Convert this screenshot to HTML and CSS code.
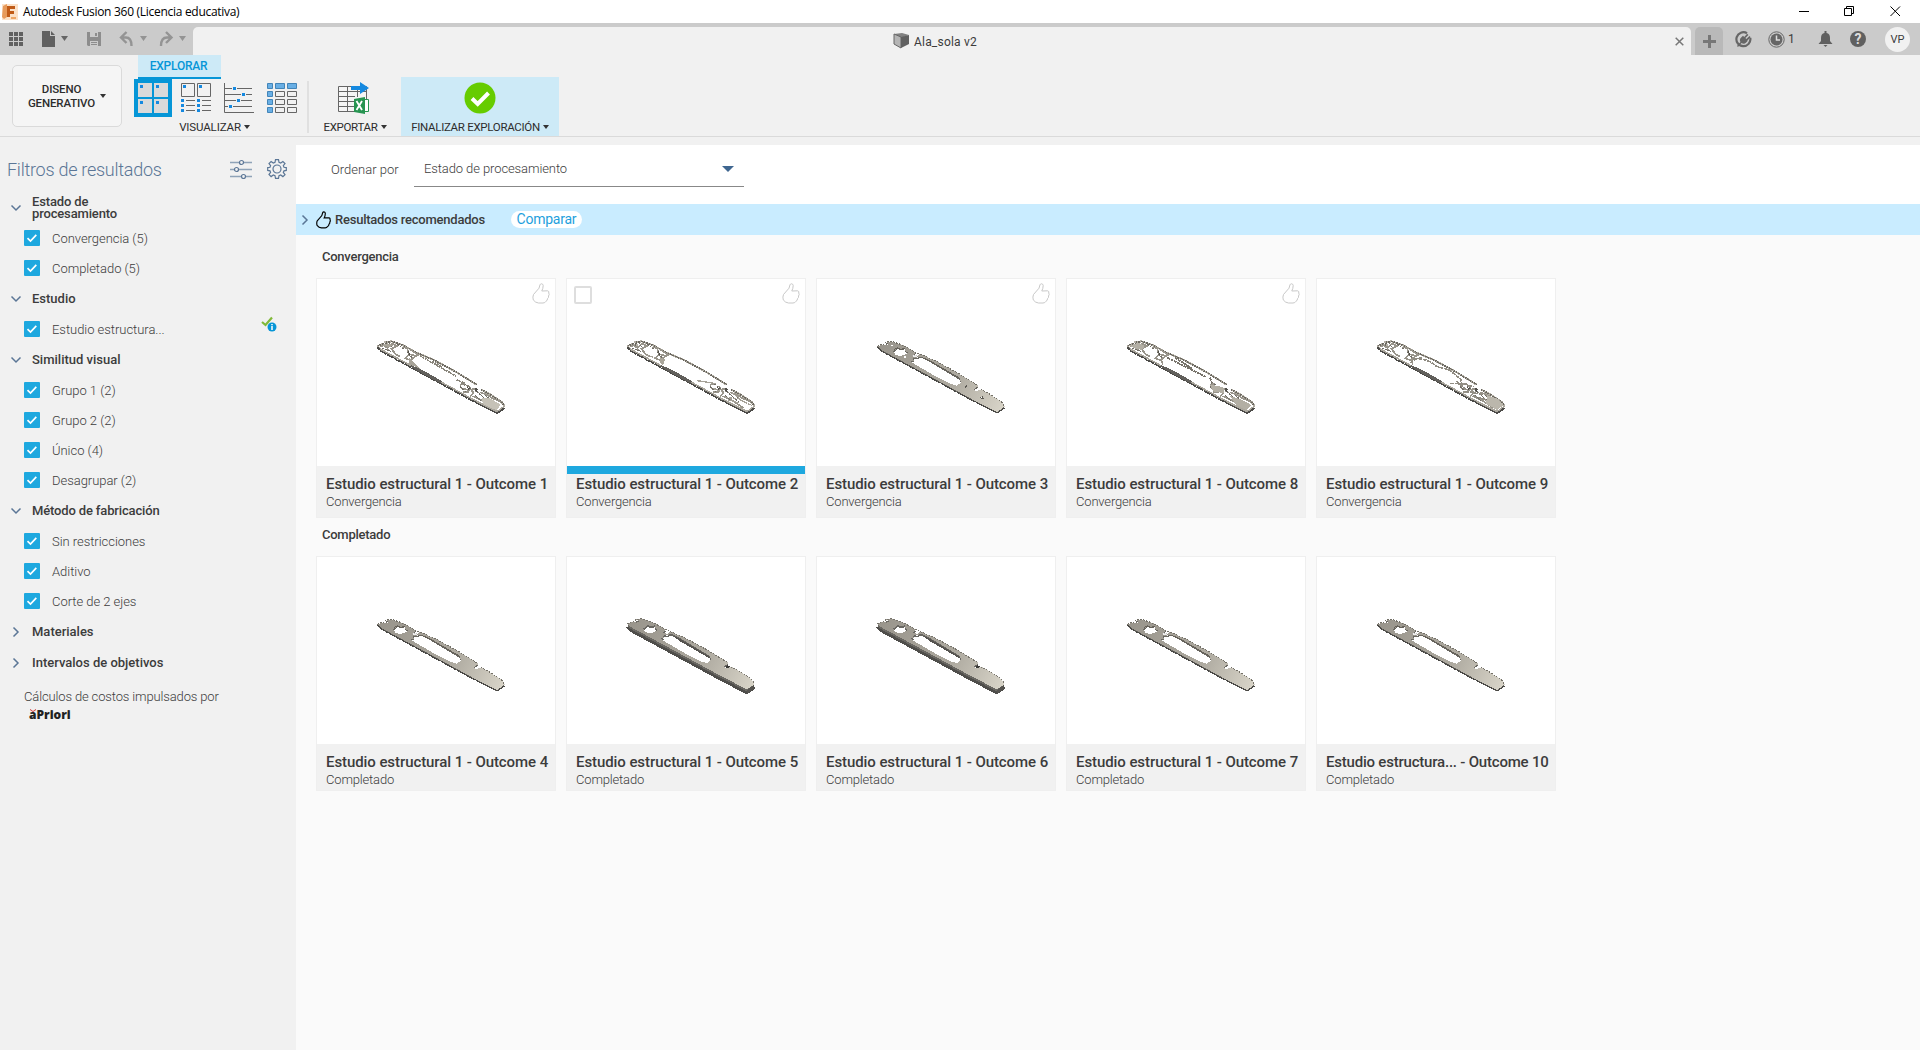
FILE: index.html
```html
<!DOCTYPE html>
<html lang="es">
<head>
<meta charset="utf-8">
<title>Autodesk Fusion 360 (Licencia educativa)</title>
<link rel="stylesheet" href="styles.css">
</head>
<body>
<svg class="defs" width="0" height="0">
  <defs>
    <linearGradient id="metal" x1="50" y1="70" x2="430" y2="270" gradientUnits="userSpaceOnUse"><stop offset="0" stop-color="#98948b"/><stop offset=".6" stop-color="#aeaaa0"/><stop offset="1" stop-color="#d9d5c9"/></linearGradient>
    <path id="edge" d="M52 78L62 89L160 142L250 191L340 240L411 276L434 260"/>
    <path id="upper" d="M52 79L66 72L80 75L76 67L95 64L130 76L165 96L222 120L290 157L350 194M362 208L392 224L425 246L434 259"/>
    <path id="face" fill-rule="evenodd" d="M52 79L70 73L80 75L88 72L78 66L95 64L130 76L168 97L160 106L172 110L180 102L222 120L290 157L356 197L341 208L347 214L363 208L392 224L425 246L434 260L411 276L340 240L250 191L160 142L62 89ZM96 92L106 91L112 82L122 86L136 84L136 93L144 98L132 105L118 108L106 104L102 97ZM158 115L185 110L210 122L298 175L304 187L291 197L272 192L225 168L163 132L152 123L162 122Z"/>
  </defs>
  <symbol id="check" viewBox="0 0 16 16"><path d="M3.5 8.2L6.5 11L12.3 4.8" fill="none" stroke="#fff" stroke-width="1.7"/></symbol>
  <symbol id="down" viewBox="0 0 12 8"><path d="M1.5 1.5L6 6L10.500 1.500" fill="none" stroke="#5b7696" stroke-width="1.5"/></symbol>
  <symbol id="right" viewBox="0 0 8 12"><path d="M1.500 1.500L6 6L1.500 10.500" fill="none" stroke="#5b7696" stroke-width="1.5"/></symbol>
  <symbol id="thumb" viewBox="0 0 18 21"><path d="M1.500 11.500L7 5.200L8 1.800Q8.400.7 9.600.8Q11.200 1 11.200 2.600Q11.100 5.500 9.800 8L15.500 7.800Q17.200 8.100 16.800 10.100Q17.700 11.500 16.500 13Q17 14.600 15.500 15.600Q15.600 17.600 13.800 18.400Q13 20 11 20H6.500Q3.500 19.800 1.300 17Q.4 14 1.500 11.500Z" fill="none" stroke="currentColor"/></symbol>
  <symbol id="solid" viewBox="0 0 480 330">
    <use href="#face" y="4" fill="#6a6862"/><use href="#face" fill="url(#metal)"/>
    <path d="M185 112L210 123L299 175M102 89L112 84L122 88L134 86" fill="none" stroke="#656159" stroke-width="3"/>
    <use href="#upper" fill="none" stroke="#737067" stroke-width="3" stroke-dasharray="5 4"/>
    <use href="#edge" y="3" fill="none" stroke="#484744" stroke-width="4" stroke-dasharray="9 2"/>
    <path d="M157 105H171V111H158Z" fill="#eee" stroke="#77736a" stroke-dasharray="3 3"/>
  </symbol>
  <symbol id="bored" viewBox="0 0 480 330"><use href="#solid"/><path d="M313 197L321 196L322 202L315 203ZM360 230L370 229L371 236L363 237Z" fill="#5a5852"/><path d="M362 232H366V235H362ZM132 109H138V113H132ZM93 76H98V79H93Z" fill="#fff"/></symbol>
  <symbol id="thick" viewBox="0 0 480 330">
    <use href="#edge" y="8" fill="none" stroke="#4f4e4b" stroke-width="9"/>
    <use href="#face" y="4" fill="#696762"/><use href="#face" y="-2" fill="url(#metal)"/>
    <path d="M186 112L212 124L299 176V181L210 130ZM411 276L433 260V271L411 287Z" fill="#55534f"/>
    <use href="#upper" y="-2" fill="none" stroke="#77746c" stroke-width="3" stroke-dasharray="5 4"/>
    <path d="M352 200L361 207L347 211Z" fill="#393836"/>
  </symbol>
  <symbol id="frame" viewBox="0 0 480 330">
    <use href="#upper" fill="none" stroke="#b5b1a7" stroke-width="6"/>
    <use href="#upper" fill="none" stroke="#6a675f" stroke-width="5" stroke-dasharray="5 3"/>
    <use href="#edge" y="-1" fill="none" stroke="#aba79d" stroke-width="5"/>
    <use href="#edge" y="4" fill="none" stroke="#4c4b48" stroke-width="5" stroke-dasharray="11 1"/>
    <path d="M150 134Q190 149 246 184L240 190L158 144Z" fill="#62605c"/>
    <path d="M60 80L70 76L82 83L96 71L110 78L94 86L107 103L120 110M140 82L147 103L171 108M128 80L145 88M150 88L176 105M150 122L164 110L180 103M75 89L88 88M147 103L136 115L155 122L158 134M303 205L325 210L345 206M300 195L315 190M325 197L340 218L330 230M345 210L356 220M360 217L380 224L400 236L424 246M337 228L365 240L400 264M326 216L310 216" fill="none" stroke="#99958b" stroke-width="5"/>
    <path d="M66 84L92 94M88 68L96 84M112 74L134 88M140 95L160 118M300 200L322 220M312 192L332 206M346 225L362 243M375 226L402 246M350 214L386 246" fill="none" stroke="#706d65" stroke-width="3" stroke-dasharray="6 3"/>
    <path d="M144 90L151 103L147 107ZM320 200L330 206L326 210ZM345 203L356 207L347 218Z" fill="#4f4d48"/>
  </symbol>
  <symbol id="wing1" viewBox="0 0 480 330"><use href="#frame"/><path d="M365 234L390 235L422 254L410 271L385 261L368 250Z" fill="#c6c2b7"/><path d="M148 112L162 129L180 147L145 131ZM68 76L82 70L101 76L88 81Z" fill="#a8a499"/><path d="M180 107L250 147L288 168M217 123L246 141M290 180L313 189M302 190L330 200" fill="none" stroke="#8a867c" stroke-width="5" stroke-dasharray="6 2"/></symbol>
  <symbol id="wing2" viewBox="0 0 480 330"><use href="#frame"/><path d="M150 110L166 119L158 136L149 126Z" fill="#aaa69b"/><path d="M262 182L318 191M108 106L136 113M365 218L405 249M345 232L385 236L426 257M310 205L335 216M355 240L388 249" fill="none" stroke="#a6a298" stroke-width="4" stroke-dasharray="10 2"/></symbol>
  <symbol id="wing8" viewBox="0 0 480 330"><use href="#frame"/><path d="M60 77L83 68L104 77L96 90L76 86ZM299 193L340 202L343 220L310 214ZM360 228L393 238L424 255L410 271L377 254Z" fill="#b3afa4"/><path d="M172 113L225 139L287 171M195 113L245 145M300 173L307 190" fill="none" stroke="#77736a" stroke-width="5" stroke-dasharray="9 2"/></symbol>
  <symbol id="wing9" viewBox="0 0 480 330"><use href="#frame"/><path d="M382 226L410 236L430 256L411 270L378 251Z" fill="#bbb7ac"/><path d="M160 115Q205 115 228 138L270 151L302 178L306 193M151 130Q160 116 188 113M270 190L317 192L340 201M315 214L370 224M290 183L319 210M340 228L380 240" fill="none" stroke="#918d83" stroke-width="5" stroke-dasharray="12 2"/></symbol>
</svg>

<header class="titlebar">
  <svg class="app-logo" width="16" height="16" viewBox="0 0 16 16"><path d="M0 0H16V16H0Z" fill="#fbe1c8"/><path d="M1 2L5 0V13L2 15L0 13Z" fill="#e79a5a"/><path d="M5 2H13V5H8V7H12V10H8V13H5Z" fill="#c05a16"/><path d="M9 13H14V15H9Z" fill="#efa664"/></svg>
  <span class="app-title">Autodesk Fusion 360 (Licencia educativa)</span>
  <svg class="win-min" width="11" height="11"><path d="M0 5.500H10" stroke="#000"/></svg>
  <svg class="win-max" width="11" height="11" fill="none" stroke="#000"><path d="M.5 2.500H7.500V9.500H.5ZM2.500 2.500V.5H9.500V7.500H7.500"/></svg>
  <svg class="win-close" width="11" height="11" stroke="#000"><path d="M.5.5L10 10M10 .5L.5 10"/></svg>
</header>

<nav class="tabbar">
  <div class="quick">
    <svg width="193" height="32" viewBox="0 0 193 32">
      <path d="M9 9h4v4h-4zM14 9h4v4h-4zM19 9h4v4h-4zM9 14h4v4h-4zM14 14h4v4h-4zM19 14h4v4h-4zM9 19h4v4h-4zM14 19h4v4h-4zM19 19h4v4h-4zM42 8h8v5h5v11H42zM51 8l4 4h-4z" fill="#616161"/>
      <path d="M61 13h7l-3.500 5z" fill="#666"/>
      <path d="M87 9h14v14H88l-1-1z" fill="#8d8d8d"/><path d="M90 9h8v5h-8zM90 18h8v5h-8z" fill="#cbcbcb"/><path d="M95 10h2v3h-2zM91 19h6v1h-6zM91 21h6v1h-6z" fill="#8d8d8d"/>
      <path d="M140 13h7l-3.500 5zM179 13h7l-3.500 5z" fill="#949494"/>
      <path d="M126.500 9L121 14.500L126.500 20M121.500 14.500H126Q131.500 14.500 131.500 23M166 9L171.500 14.500L166 20M171 14.500H167Q161 14.500 161 23" fill="none" stroke="#949494" stroke-width="2.400"/>
    </svg>
  </div>
  <div class="doc-tab">
    <svg width="17" height="16" viewBox="0 0 17 16"><path d="M1 1L9 0L16 2L8 5Z" fill="#828282"/><path d="M1 1L8 4V15L1 11Z" fill="#b5b5b5" stroke="#666"/><path d="M8 4L16 2V11L8 15Z" fill="#616161"/></svg>
    <span class="doc-name">Ala_sola v2</span>
    <svg class="doc-close" width="9" height="9"><path d="M.7.7L8.300 8.300M8.300.7L.7 8.300" stroke="#777" stroke-width="1.500"/></svg>
  </div>
  <div class="new-tab"><svg width="13" height="13"><path d="M6.500 0V13M0 6.500H13" stroke="#777" stroke-width="3"/></svg></div>
  <svg class="ic-ext" width="17" height="17" viewBox="0 0 17 17"><path d="M12 2.200A7 7 0 1 0 15.300 7" fill="none" stroke="#666" stroke-width="2.200"/><path d="M2 15L5.500 11Q4 8.500 6.200 6.400L8 4.700L9.200 5.900L12.200 2.800L13.400 4L10.400 7.100L11.400 8.100L14.500 5L15.700 6.200L12.600 9.300Q13 10 10.900 11.800Q9 13.500 6.500 12L3 16Z" fill="#666"/></svg>
  <svg class="ic-clock" width="17" height="17" viewBox="0 0 17 17"><circle cx="8.500" cy="8.500" r="7.700" fill="none" stroke="#666"/><circle cx="8.500" cy="8.500" r="6" fill="#666"/><path d="M8.500 4.500V9H12" fill="none" stroke="#ddd" stroke-width="1.500"/></svg>
  <span class="jobs">1</span>
  <svg class="ic-bell" width="15" height="16" viewBox="0 0 15 16"><path d="M6.500 0h2v2q3.500.5 3.500 5v3l2.500 3H.5L3 10V7q0-4.500 3.500-5zM5.500 14h4L7.500 16z" fill="#606060"/></svg>
  <span class="help">?</span>
  <span class="avatar">VP</span>
</nav>

<section class="ribbon">
  <button class="workspace"><span>DISENO<br>GENERATIVO</span><i class="caret"></i></button>
  <div class="panel">
    <div class="ribbon-tab">EXPLORAR</div>
    <svg class="views" width="164" height="38" viewBox="0 0 164 38">
      <path d="M0 0H38V38H0Z" fill="#0696d7"/><path d="M4 4H18V18H4ZM20 4H34V18H20ZM4 20H18V34H4ZM20 20H34V34H20Z" fill="#dadada"/>
      <path d="M6 6h3v3H6zM22 6h3v3h-3zM6 22h3v3H6zM22 22h3v3h-3zM49 6h3v3h-3zM65 6h3v3h-3zM47 20h3v3h-3zM63 20h3v3h-3zM47 25h3v3h-3zM63 25h3v3h-3zM47 30h3v3h-3zM63 30h3v3h-3zM99 8h3v3h-3zM108 14h3v3h-3zM103 20h3v3h-3zM95 26h3v3h-3z" fill="#1589e0"/>
      <path d="M47.500 4.500H60.500V17.500H47.500ZM63.500 4.500H76.500V17.500H63.500ZM52 21.500H61M68 21.500H77M52 26.500H61M68 26.500H77M52 31.500H61M68 31.500H77M90.500 4V33.500H120M91 9.500H98M103 9.500H118M91 15.500H107M112 15.500H118M91 21.500H102M107 21.500H118M91 27.500H94M99 27.500H118M141.500 12.500H150.500V17.500H141.500ZM153.500 12.500H162.500V17.500H153.500ZM141.500 20.500H150.500V25.500H141.500ZM153.500 20.500H162.500V25.500H153.500ZM141.500 28.500H150.500V33.500H141.500ZM153.500 28.500H162.500V33.500H153.500Z" fill="none" stroke="#666"/>
      <path d="M133.500 4.500H138.500V9.500H133.500ZM141.500 4.500H150.500V9.500H141.500ZM153.500 4.500H162.500V9.500H153.500ZM133.500 12.500H138.500V17.500H133.500ZM133.500 20.500H138.500V25.500H133.500ZM133.500 28.500H138.500V33.500H133.500Z" fill="#69afe5" stroke="#4385b8"/>
    </svg>
    <div class="menu-label"><span>VISUALIZAR</span><i class="caret"></i></div>
  </div>
  <i class="divider"></i>
  <div class="export">
    <svg width="32" height="32" viewBox="0 0 32 32"><path d="M1.500 4.500H29.500V29.500H1.500ZM1 9.500H30M1 14.500H18M1 19.500H18M1 24.500H18M10.500 4V30M20.500 4V15" fill="#f5f5f5" stroke="#666"/><path d="M14 4h9V0l9 6-9 6V8h-9z" fill="#1589e0"/><path d="M17 17L28 15V32L17 30Z" fill="#279451"/><path d="M28 17.500H31.500V29.500H28" fill="#fff" stroke="#279451"/><path d="M19.500 19L25 28M25 19L19.500 28" stroke="#fff" stroke-width="1.800"/></svg>
    <div class="menu-label"><span>EXPORTAR</span><i class="caret"></i></div>
  </div>
  <div class="finish">
    <svg width="32" height="32"><circle cx="16" cy="16" r="15.500" fill="#6c0"/><path d="M8 16.500L13.700 22L24.500 11" fill="none" stroke="#fff" stroke-width="4"/></svg>
    <div class="menu-label"><span>FINALIZAR EXPLORACIÓN</span><i class="caret"></i></div>
  </div>
</section>

<div class="workarea">
  <aside class="sidebar">
    <div class="side-head">
      <span class="side-title">Filtros de resultados</span>
      <svg width="22" height="20" viewBox="0 0 22 20"><path d="M0 3.500H22M0 10.500H22M0 17.500H22" stroke="#8fa3b8" stroke-width="1.500"/><g fill="#f1f1f1" stroke="#5b7696" stroke-width="1.200"><circle cx="11.500" cy="3.500" r="2"/><circle cx="6.500" cy="10.500" r="2"/><circle cx="13.500" cy="17.500" r="2"/></g></svg>
      <svg class="gear" width="20" height="20" viewBox="0 0 20 20" fill="none" stroke="#5b7696" stroke-width="1.200"><path d="M8.500.7h3l.5 2.600 1.700.7L15.900 2.500 18 4.500 16.300 6.700 17 8.300l2.300.3v2.800L17 11.800l-.7 1.600 1.700 2.200-2.100 2L13.700 16l-1.700.7-.5 2.600h-3L8 16.700 6.300 16 4.100 17.600 2 15.500l1.600-2.100L3 11.800.7 11.400V8.600L3 8.300l.6-1.600L2 4.500l2.100-2L6.300 4 8 3.300z"/><circle cx="10" cy="10" r="4"/></svg>
    </div>
    <div class="group group-first"><svg class="chev" width="12" height="8"><use href="#down"/></svg><span>Estado de<br>procesamiento</span></div>
    <label class="opt"><i class="box"><svg><use href="#check"/></svg></i><span>Convergencia (5)</span></label>
    <label class="opt"><i class="box"><svg><use href="#check"/></svg></i><span>Completado (5)</span></label>
    <div class="group"><svg class="chev" width="12" height="8"><use href="#down"/></svg><span>Estudio</span></div>
    <label class="opt"><i class="box"><svg><use href="#check"/></svg></i><span>Estudio estructura...</span><svg class="status" width="16" height="16" viewBox="0 0 16 16"><path d="M1 6L4.500 9L11 1.500" fill="none" stroke="#80b938" stroke-width="2.200"/><circle cx="11" cy="11" r="4.500" fill="#0696d7"/><path d="M11 8V9.300M11 10V14" stroke="#fff" stroke-width="1.500"/></svg></label>
    <div class="group"><svg class="chev" width="12" height="8"><use href="#down"/></svg><span>Similitud visual</span></div>
    <label class="opt"><i class="box"><svg><use href="#check"/></svg></i><span>Grupo 1 (2)</span></label>
    <label class="opt"><i class="box"><svg><use href="#check"/></svg></i><span>Grupo 2 (2)</span></label>
    <label class="opt"><i class="box"><svg><use href="#check"/></svg></i><span>Único (4)</span></label>
    <label class="opt"><i class="box"><svg><use href="#check"/></svg></i><span>Desagrupar (2)</span></label>
    <div class="group method"><svg class="chev" width="12" height="8"><use href="#down"/></svg><span>Método de fabricación</span></div>
    <label class="opt"><i class="box"><svg><use href="#check"/></svg></i><span>Sin restricciones</span></label>
    <label class="opt"><i class="box"><svg><use href="#check"/></svg></i><span>Aditivo</span></label>
    <label class="opt"><i class="box"><svg><use href="#check"/></svg></i><span>Corte de 2 ejes</span></label>
    <div class="group"><svg class="chev" width="8" height="12"><use href="#right"/></svg><span>Materiales</span></div>
    <div class="group"><svg class="chev" width="8" height="12"><use href="#right"/></svg><span>Intervalos de objetivos</span></div>
    <div class="cost">Cálculos de costos impulsados por</div>
    <div class="apriori">aPriori<svg class="apriori-mark" width="6" height="3"><path d="M0 0L3 2L6 0V1L3 3L0 1Z" fill="#d03030"/></svg></div>
  </aside>

  <main class="results">
    <div class="sortbar">
      <span class="sort-label">Ordenar por</span>
      <div class="select"><span class="sort-value">Estado de procesamiento</span><i class="select-caret"></i></div>
    </div>
    <div class="recommended">
      <svg width="8" height="12"><use href="#right"/></svg>
      <svg class="rec-thumb" width="15" height="18"><use href="#thumb"/></svg>
      <span class="rec-text">Resultados recomendados</span>
      <span class="compare">Comparar</span>
    </div>
    <h2 class="section">Convergencia</h2>
    <div class="cards">
      <article class="card"><div class="media"><svg class="like" width="18" height="21"><use href="#thumb"/></svg><svg class="part"><use href="#wing1"/></svg></div><div class="info"><b>Estudio estructural 1 - Outcome 1</b><small>Convergencia</small></div></article>
      <article class="card selected"><div class="media"><i class="pick"></i><svg class="like" width="18" height="21"><use href="#thumb"/></svg><svg class="part"><use href="#wing2"/></svg></div><div class="info"><b>Estudio estructural 1 - Outcome 2</b><small>Convergencia</small></div></article>
      <article class="card"><div class="media"><svg class="like" width="18" height="21"><use href="#thumb"/></svg><svg class="part"><use href="#bored"/></svg></div><div class="info"><b>Estudio estructural 1 - Outcome 3</b><small>Convergencia</small></div></article>
      <article class="card"><div class="media"><svg class="like" width="18" height="21"><use href="#thumb"/></svg><svg class="part"><use href="#wing8"/></svg></div><div class="info"><b>Estudio estructural 1 - Outcome 8</b><small>Convergencia</small></div></article>
      <article class="card"><div class="media"><svg class="part"><use href="#wing9"/></svg></div><div class="info"><b>Estudio estructural 1 - Outcome 9</b><small>Convergencia</small></div></article>
    </div>
    <h2 class="section">Completado</h2>
    <div class="cards completed">
      <article class="card"><div class="media"><svg class="part"><use href="#solid"/></svg></div><div class="info"><b>Estudio estructural 1 - Outcome 4</b><small>Completado</small></div></article>
      <article class="card"><div class="media"><svg class="part"><use href="#thick"/></svg></div><div class="info"><b>Estudio estructural 1 - Outcome 5</b><small>Completado</small></div></article>
      <article class="card"><div class="media"><svg class="part"><use href="#thick"/></svg></div><div class="info"><b>Estudio estructural 1 - Outcome 6</b><small>Completado</small></div></article>
      <article class="card"><div class="media"><svg class="part"><use href="#solid"/></svg></div><div class="info"><b>Estudio estructural 1 - Outcome 7</b><small>Completado</small></div></article>
      <article class="card truncated"><div class="media"><svg class="part"><use href="#solid"/></svg></div><div class="info"><b>Estudio estructura... - Outcome 10</b><small>Completado</small></div></article>
    </div>
  </main>
</div>
</body>
</html>
```
FILE: styles.css
```css
* { box-sizing: border-box; }
body { margin: 0; width: 1920px; height: 1050px; overflow: hidden; display: flex; flex-direction: column; background: #f1f1f1; font-family: Roboto, "Liberation Sans", sans-serif; color: #3c3c3c; }
svg { display: block; flex: none; }
.defs { position: absolute; }

.titlebar { height: 23px; flex: none; background: #fff; display: flex; align-items: center; padding-left: 2px; color: #000; }
.app-title { font: 12px "Open Sans", sans-serif; letter-spacing: -0.29px; margin-left: 5px; margin-right: auto; }
.win-min { margin-right: 34px; }
.win-max { margin-right: 35px; }
.win-close { margin-right: 19px; }

.tabbar { height: 32px; flex: none; background: #cbcbcb; display: flex; align-items: center; }
.quick { width: 193px; }
.doc-tab { width: 1498px; height: 28px; align-self: flex-end; background: #f1f1f1; border-radius: 5px 5px 0 0; display: flex; align-items: center; padding-left: 700px; }
.doc-name { font-size: 12px; margin-left: 4px; margin-right: auto; padding-top: 1px; letter-spacing: 0.2px; }
.doc-close { margin-right: 7px; }
.new-tab { width: 28px; height: 28px; align-self: flex-end; margin-left: 4px; background: #b9b9b9; border-radius: 5px 5px 0 0; display: grid; place-items: center; }
.ic-ext { margin-left: 12px; }
.ic-clock { margin-left: 16px; }
.jobs { font-size: 12px; margin-left: 3px; width: 30px; }
.help { margin-left: 17px; width: 16px; height: 16px; border-radius: 50%; background: #606060; color: #ddd; font-size: 14px; font-weight: 700; line-height: 17px; text-align: center; }
.avatar { margin-left: 19px; width: 25px; height: 25px; border-radius: 50%; background: #f1f1f1; font-size: 11px; line-height: 25px; text-align: center; }

.ribbon { height: 82px; flex: none; border-bottom: 1px solid #dadada; display: flex; color: #2d2d2d; }
.caret { width: 0; height: 0; border: 3px solid transparent; border-top: 4px solid #333; border-bottom: 0; }
.workspace { width: 110px; height: 62px; margin: 10px 12px 0 12px; padding: 0; background: #f5f5f5; border: 1px solid #dadada; border-radius: 5px; display: flex; align-items: center; justify-content: center; gap: 5px; font: 500 11.5px/14px Roboto, sans-serif; letter-spacing: -0.15px; color: #2d2d2d; text-align: center; }
.panel { width: 173px; }
.divider { width: 2px; height: 52px; margin-top: 26px; background: #e0e0e0; }
.ribbon-tab { margin-left: 4px; width: 83px; height: 24px; background: #cdeaf7; border-bottom: 2px solid #0696d7; color: #0696d7; text-align: center; font: 500 12px/22px Roboto, sans-serif; letter-spacing: -0.25px; padding-right: 2px; }
.menu-label { display: flex; align-items: center; justify-content: center; gap: 3px; font-size: 11.5px; line-height: 14px; letter-spacing: -0.3px; }
.panel .menu-label { margin-top: 3px; width: 161px; letter-spacing: -0.13px; }
.export { width: 92px; padding-top: 27px; display: flex; flex-direction: column; align-items: center; }
.export svg { margin-right: 5px; }
.finish { width: 158px; margin-top: 22px; padding-top: 5px; background: #cdeaf7; display: flex; flex-direction: column; align-items: center; }
.export .menu-label, .finish .menu-label { margin-top: 6px; }

.workarea { flex: 1; display: flex; }
.sidebar { width: 296px; }
.side-head { height: 60px; display: flex; align-items: center; padding: 4px 9px 0 7px; color: #5b7696; }
.side-title { font-size: 18px; font-weight: 300; letter-spacing: -0.26px; margin-right: auto; }
.gear { margin-left: 15px; }
.group { height: 31px; padding-left: 10px; display: flex; align-items: center; font-size: 13px; font-weight: 500; line-height: 12px; }
.group-first { height: 21px; margin-bottom: 5px; letter-spacing: -0.15px; }
.method { letter-spacing: -0.15px; }
.chev { margin-right: 10px; width: 12px; }
.opt { height: 30px; padding-left: 24px; display: flex; align-items: center; font-size: 13px; font-weight: 300; letter-spacing: -0.04px; }
.box { width: 16px; height: 16px; margin-right: 12px; background: #1ea8df; border-radius: 1px; }
.box svg { width: 16px; height: 16px; }
.status { margin: 0 19px 10px auto; }
.cost { padding-left: 24px; font-size: 13px; font-weight: 300; line-height: 16px; letter-spacing: -0.14px; margin-top: 11px; }
.apriori { position: relative; margin-left: 29px; padding-top: 1px; font: 800 12px/18px "Open Sans", sans-serif; color: #222; width: 44px; }
.apriori-mark { position: absolute; left: 1px; top: 4px; }

.results { width: 1624px; margin-top: 8px; background: #fafafa; }
.sortbar { height: 59px; background: #fff; display: flex; padding: 0 0 0 35px; }
.sort-label { width: 83px; padding-top: 17px; font-size: 13px; font-weight: 300; }
.select { width: 330px; height: 42px; border-bottom: 1px solid #888; padding: 0 10px 0 10px; display: flex; align-items: center; }
.sort-value { font-size: 13px; font-weight: 300; letter-spacing: -0.1px; margin-right: auto; padding-top: 5px; }
.select-caret { border: 6px solid transparent; border-top-color: #3f6690; border-bottom: 0; margin-top: 6px; }
.recommended { height: 31px; background: #c9ecff; display: flex; align-items: center; padding-left: 5px; }
.rec-thumb { margin-left: 7px; color: #000; stroke-width: 1.4; }
.rec-text { margin-left: 4px; font-size: 13px; font-weight: 500; letter-spacing: -0.23px; }
.compare { margin-left: 26px; width: 71px; height: 17px; border-radius: 9px; background: #fff; color: #1e9fdd; font-size: 14px; letter-spacing: -0.25px; line-height: 17px; text-align: center; }
.section { margin: 0; height: 43px; padding-left: 26px; font-size: 13px; font-weight: 500; letter-spacing: -0.25px; line-height: 43px; }
.cards + .section { height: 38px; line-height: 34px; }
.cards { padding-left: 20px; display: flex; gap: 10px; }
.card { width: 240px; height: 240px; background: #f1f1f1; border: 1px solid #efefef; }
.completed .card { height: 235px; }
.media { position: relative; height: 187px; background: #fff; padding: 41px 0 0 43px; }
.part { width: 160px; height: 110px; shape-rendering: crispEdges; }
.like { position: absolute; right: 5px; top: 4px; color: #c8c8c8; }
.pick { position: absolute; left: 7px; top: 7px; width: 18px; height: 18px; border: 2px solid #dedede; border-radius: 2px; }
.info { padding: 9px 0 0 9px; display: flex; flex-direction: column; white-space: nowrap; }
.selected .info { border-top: 8px solid #1ea8df; padding-top: 1px; }
.info b { font-size: 15px; font-weight: 500; line-height: 18px; letter-spacing: -0.08px; }
.truncated .info b { letter-spacing: -0.21px; }
.info small { font-size: 13px; font-weight: 300; line-height: 17px; letter-spacing: -0.17px; }
```
